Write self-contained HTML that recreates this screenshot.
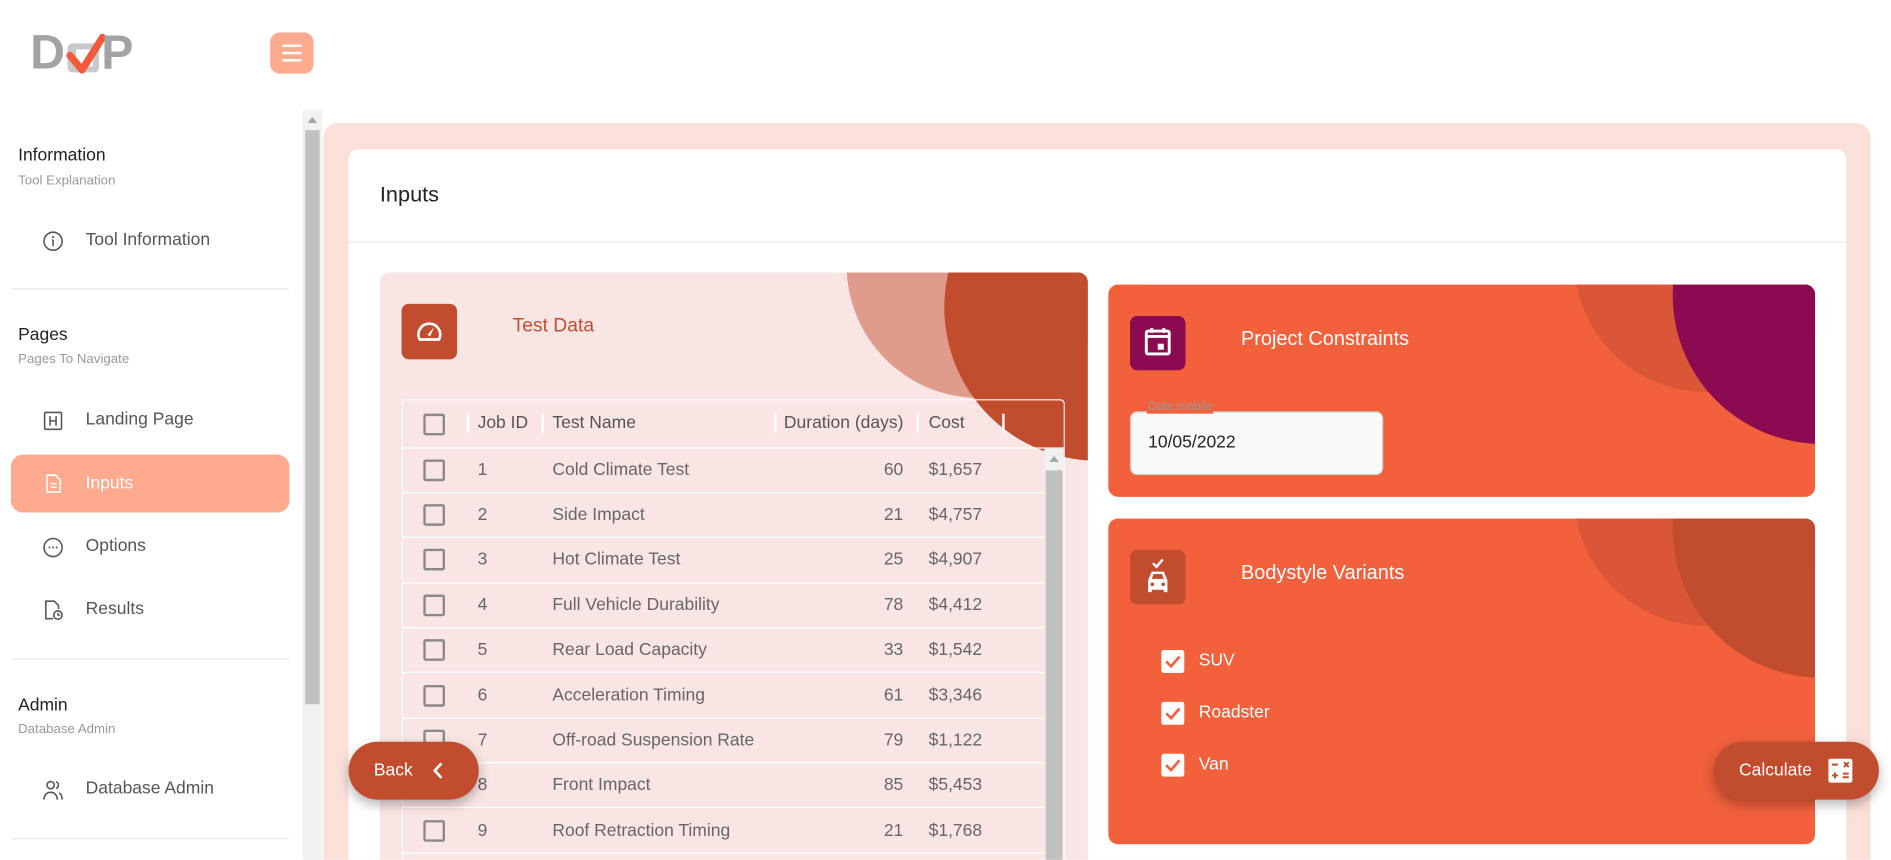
<!DOCTYPE html>
<html><head><meta charset="utf-8"><style>
*{box-sizing:border-box;margin:0;padding:0}
html,body{width:1891px;height:860px;overflow:hidden;background:#fff;font-family:"Liberation Sans",Arial,sans-serif}
#s{position:absolute;left:0;top:0;width:1568px;height:713px;transform:scale(1.20600);transform-origin:0 0;overflow:hidden}
.a{position:absolute}
.t{position:absolute;white-space:nowrap;line-height:1}
.nav{color:#555;font-size:14.5px}
.ic{position:absolute;width:18px;height:18px}
.hd{font-size:14.5px;color:#222}
.sub{font-size:11px;color:#999}
.div{position:absolute;left:10px;width:230px;height:1px;background:#e8e8e8}
.row{position:absolute;left:334px;width:532px;height:1px;background:#fff}
.cb{position:absolute;left:351px;width:18px;height:18px;border:2px solid #8a8a8a;border-radius:2px}
.cell{position:absolute;font-size:14.5px;color:#666;line-height:1;white-space:nowrap}
.wcb{position:absolute;left:963px;width:19px;height:19px;background:#fff;border-radius:2px}
.wl{position:absolute;left:994px;color:#fff;font-size:14.5px;line-height:1}
</style></head><body><div id="s">
<!-- logo -->
<div class="t" style="left:25px;top:24px;font-size:40px;font-weight:bold;color:#a3a3a3;letter-spacing:-1px">D</div>
<div class="a" style="left:56px;top:36px;width:26px;height:24px;border-radius:4px;background:#c8c8c8"></div>
<div class="a" style="left:63px;top:41px;width:14px;height:14px;background:#fff"></div>
<svg class="a" style="left:52px;top:22px" width="42" height="52" viewBox="0 0 42 52"><path d="M6 24 L16 36 L33 9" stroke="#f05a3a" stroke-width="6" fill="none" stroke-linecap="round" stroke-linejoin="round"/></svg>
<div class="t" style="left:84px;top:24px;font-size:40px;font-weight:bold;color:#a3a3a3">P</div>
<div class="a" style="left:224px;top:27px;width:36px;height:34px;border-radius:8px;background:#fdaa8f"></div>
<div class="a" style="left:234px;top:37px;width:16px;height:1.5px;background:#fff;box-shadow:0 6px 0 #fff,0 12px 0 #fff"></div>
<!-- sidebar scrollbar -->
<div class="a" style="left:251px;top:91px;width:16px;height:622px;background:#f1f1f1"></div>
<div class="a" style="left:253px;top:108px;width:12px;height:476px;background:#c1c1c1"></div>
<div class="a" style="left:255px;top:97px;border:4px solid transparent;border-bottom:5px solid #a3a3a3;border-top:0"></div>
<!-- sidebar -->
<div class="t hd" style="left:15px;top:122px">Information</div>
<div class="t sub" style="left:15px;top:145px">Tool Explanation</div>
<svg class="ic" style="left:35px;top:191px" viewBox="0 0 18 18"><circle cx="9" cy="9" r="7.5" fill="none" stroke="#555" stroke-width="1.3"/><path d="M9 8v5M8 8h1" stroke="#555" stroke-width="1.3" fill="none"/><circle cx="9" cy="5.6" r=".9" fill="#555"/></svg>
<div class="t nav" style="left:71px;top:192px">Tool Information</div>
<div class="div" style="top:239px"></div>
<div class="t hd" style="left:15px;top:271px">Pages</div>
<div class="t sub" style="left:15px;top:293px">Pages To Navigate</div>
<svg class="ic" style="left:35px;top:340px" viewBox="0 0 18 18"><rect x="2" y="2" width="14" height="14" rx="1" fill="none" stroke="#555" stroke-width="1.3"/><path d="M6.5 5v8M11.5 5v8M6.5 9h5" stroke="#555" stroke-width="1.3"/></svg>
<div class="t nav" style="left:71px;top:341px">Landing Page</div>
<div class="a" style="left:9px;top:377px;width:231px;height:48px;border-radius:10px;background:#fdaa8f"></div>
<svg class="ic" style="left:35px;top:392px" viewBox="0 0 18 18"><path d="M4 2h7l4 4v10H4z" fill="none" stroke="#fff" stroke-width="1.3" stroke-linejoin="round"/><path d="M7 9h5M7 12h5" stroke="#fff" stroke-width="1.2"/></svg>
<div class="t nav" style="left:71px;top:394px;color:#fff">Inputs</div>
<svg class="ic" style="left:35px;top:445px" viewBox="0 0 18 18"><circle cx="9" cy="9" r="7.5" fill="none" stroke="#555" stroke-width="1.3"/><circle cx="6" cy="9" r=".8" fill="#555"/><circle cx="9" cy="9" r=".8" fill="#555"/><circle cx="12" cy="9" r=".8" fill="#555"/></svg>
<div class="t nav" style="left:71px;top:446px">Options</div>
<svg class="ic" style="left:35px;top:497px" viewBox="0 0 18 18"><path d="M9 16H3V1.5h7l3.5 3.5v3" fill="none" stroke="#555" stroke-width="1.3"/><circle cx="13" cy="13" r="3.5" fill="none" stroke="#555" stroke-width="1.3"/><path d="M13 11v2h2" stroke="#555" stroke-width="1.1" fill="none"/></svg>
<div class="t nav" style="left:71px;top:498px">Results</div>
<div class="div" style="top:546px"></div>
<div class="t hd" style="left:15px;top:578px">Admin</div>
<div class="t sub" style="left:15px;top:600px">Database Admin</div>
<svg class="ic" style="left:35px;top:646px" viewBox="0 0 18 18"><circle cx="7" cy="5" r="3" fill="none" stroke="#555" stroke-width="1.3"/><path d="M1.5 17c0-4 2.5-6 5.5-6s5.5 2 5.5 6M11.5 2.2a3 3 0 010 5.6M14 11.5c1.5.8 2.5 2.5 2.5 5.5" fill="none" stroke="#555" stroke-width="1.3"/></svg>
<div class="t nav" style="left:71px;top:647px">Database Admin</div>
<div class="div" style="top:695px"></div>
<!-- main -->
<div class="a" style="left:268px;top:102px;width:1283px;height:611px;border-radius:12px 12px 0 0;background:#fbe0da"></div>
<div class="a" style="left:289px;top:124px;width:1242px;height:589px;border-radius:8px 8px 0 0;background:#fff"></div>
<div class="t" style="left:315px;top:152px;font-size:18px;color:#222">Inputs</div>
<div class="a" style="left:289px;top:200px;width:1242px;height:1px;background:#ececec"></div>
<!-- test data card -->
<div class="a" style="left:315px;top:226px;width:587px;height:487px;border-radius:8px 8px 0 0;background:#f9e6e4;overflow:hidden">
 <div class="a" style="left:387px;top:-116px;width:220px;height:220px;border-radius:50%;background:#df9c8c"></div>
 <div class="a" style="left:468px;top:-98px;width:254px;height:254px;border-radius:50%;background:#c24d2e"></div>
</div>
<div class="a" style="left:333px;top:252px;width:46px;height:46px;border-radius:6px;background:#c24d2e"></div>
<svg class="a" style="left:343px;top:262px" width="26" height="26" viewBox="0 0 26 26"><path d="M5 19.5a9 9 0 1116 0z" fill="none" stroke="#fff" stroke-width="2.2" stroke-linejoin="round"/><path d="M11.5 15.5L17 9.5l-3.5 7.5z" fill="#fff"/></svg>
<div class="t" style="left:425px;top:263px;font-size:16px;color:#c24d2e">Test Data</div>
<!-- table -->
<div class="a" style="left:333px;top:331px;width:550px;height:382px;border:1px solid #fff;border-bottom:0;border-radius:4px 4px 0 0"></div>
<div class="row" style="top:371px;width:548px"></div>
<div class="cb" style="top:343px"></div>
<div class="a" style="left:387px;top:343px;width:1.5px;height:16px;background:#fff"></div>
<div class="a" style="left:449px;top:343px;width:1.5px;height:16px;background:#fff"></div>
<div class="a" style="left:642px;top:343px;width:1.5px;height:16px;background:#fff"></div>
<div class="a" style="left:760px;top:343px;width:1.5px;height:16px;background:#fff"></div>
<div class="a" style="left:831px;top:343px;width:1.5px;height:16px;background:#fff"></div>
<div class="cell" style="left:396px;top:344px;color:#555">Job ID</div>
<div class="cell" style="left:458px;top:344px;color:#555">Test Name</div>
<div class="cell" style="left:650px;top:344px;color:#555">Duration (days)</div>
<div class="cell" style="left:770px;top:344px;color:#555">Cost</div>
<div class="a" style="left:866px;top:372px;width:16px;height:341px;background:#f1f1f1"></div>
<div class="a" style="left:867px;top:390px;width:14px;height:323px;background:#c1c1c1"></div>
<div class="a" style="left:870px;top:378px;border:4px solid transparent;border-bottom:5px solid #a3a3a3;border-top:0"></div>

<div class="cb" style="top:381px"></div><div class="cell" style="left:396px;top:383px">1</div><div class="cell" style="left:458px;top:383px">Cold Climate Test</div><div class="cell" style="left:700px;width:49px;text-align:right;top:383px">60</div><div class="cell" style="left:770px;top:383px">$1,657</div><div class="row" style="top:408px"></div>
<div class="cb" style="top:418px"></div><div class="cell" style="left:396px;top:420px">2</div><div class="cell" style="left:458px;top:420px">Side Impact</div><div class="cell" style="left:700px;width:49px;text-align:right;top:420px">21</div><div class="cell" style="left:770px;top:420px">$4,757</div><div class="row" style="top:445px"></div>
<div class="cb" style="top:455px"></div><div class="cell" style="left:396px;top:457px">3</div><div class="cell" style="left:458px;top:457px">Hot Climate Test</div><div class="cell" style="left:700px;width:49px;text-align:right;top:457px">25</div><div class="cell" style="left:770px;top:457px">$4,907</div><div class="row" style="top:483px"></div>
<div class="cb" style="top:493px"></div><div class="cell" style="left:396px;top:495px">4</div><div class="cell" style="left:458px;top:495px">Full Vehicle Durability</div><div class="cell" style="left:700px;width:49px;text-align:right;top:495px">78</div><div class="cell" style="left:770px;top:495px">$4,412</div><div class="row" style="top:520px"></div>
<div class="cb" style="top:530px"></div><div class="cell" style="left:396px;top:532px">5</div><div class="cell" style="left:458px;top:532px">Rear Load Capacity</div><div class="cell" style="left:700px;width:49px;text-align:right;top:532px">33</div><div class="cell" style="left:770px;top:532px">$1,542</div><div class="row" style="top:557px"></div>
<div class="cb" style="top:568px"></div><div class="cell" style="left:396px;top:570px">6</div><div class="cell" style="left:458px;top:570px">Acceleration Timing</div><div class="cell" style="left:700px;width:49px;text-align:right;top:570px">61</div><div class="cell" style="left:770px;top:570px">$3,346</div><div class="row" style="top:595px"></div>
<div class="cb" style="top:605px"></div><div class="cell" style="left:396px;top:607px">7</div><div class="cell" style="left:458px;top:607px">Off-road Suspension Rate</div><div class="cell" style="left:700px;width:49px;text-align:right;top:607px">79</div><div class="cell" style="left:770px;top:607px">$1,122</div><div class="row" style="top:632px"></div>
<div class="cb" style="top:642px"></div><div class="cell" style="left:396px;top:644px">8</div><div class="cell" style="left:458px;top:644px">Front Impact</div><div class="cell" style="left:700px;width:49px;text-align:right;top:644px">85</div><div class="cell" style="left:770px;top:644px">$5,453</div><div class="row" style="top:669px"></div>
<div class="cb" style="top:680px"></div><div class="cell" style="left:396px;top:682px">9</div><div class="cell" style="left:458px;top:682px">Roof Retraction Timing</div><div class="cell" style="left:700px;width:49px;text-align:right;top:682px">21</div><div class="cell" style="left:770px;top:682px">$1,768</div><div class="row" style="top:707px"></div>
<!-- project constraints -->
<div class="a" style="left:919px;top:236px;width:586px;height:176px;border-radius:8px;background:#f2603c;overflow:hidden">
 <div class="a" style="left:386px;top:-131px;width:220px;height:220px;border-radius:50%;background:#db5636"></div>
 <div class="a" style="left:468px;top:-114px;width:246px;height:246px;border-radius:50%;background:#8b0a50"></div>
</div>
<div class="a" style="left:937px;top:262px;width:46px;height:45px;border-radius:6px;background:#8b0a50"></div>
<svg class="a" style="left:947px;top:270px" width="26" height="28" viewBox="0 0 26 28"><rect x="3.5" y="4.5" width="19" height="19" rx="1.5" fill="none" stroke="#fff" stroke-width="2.4"/><path d="M3.5 9h19" stroke="#fff" stroke-width="2.4"/><path d="M8 2v4M18 2v4" stroke="#fff" stroke-width="2.4"/><rect x="13" y="15" width="5" height="5" fill="#fff"/></svg>
<div class="t" style="left:1029px;top:273px;font-size:16.5px;color:#fff">Project Constraints</div>
<div class="a" style="left:937px;top:341px;width:210px;height:53px;border-radius:6px;background:#f9f9f9;border:1px solid #ccc"></div>
<div class="t" style="left:951px;top:333px;font-size:10px;color:#999;background:#f2603c;padding:0 1px">Date mobile</div>
<div class="t" style="left:952px;top:360px;font-size:14.5px;color:#222">10/05/2022</div>
<!-- bodystyle -->
<div class="a" style="left:919px;top:430px;width:586px;height:270px;border-radius:8px;background:#f2603c;overflow:hidden">
 <div class="a" style="left:386px;top:-131px;width:220px;height:220px;border-radius:50%;background:#db5636"></div>
 <div class="a" style="left:468px;top:-114px;width:246px;height:246px;border-radius:50%;background:#c24d2e"></div>
</div>
<div class="a" style="left:937px;top:456px;width:46px;height:45px;border-radius:6px;background:#c24d2e"></div>
<svg class="a" style="left:947px;top:461px" width="26" height="36" viewBox="0 0 26 36"><path d="M9 6l3 3 5-6" stroke="#fff" stroke-width="2" fill="none"/><path d="M5 20l3-7h10l3 7v10h-3v-2H8v2H5z" fill="#fff"/><path d="M8 19l1.5-4h7l1.5 4z" fill="#c24d2e"/><circle cx="8.5" cy="23.5" r="1.5" fill="#c24d2e"/><circle cx="17.5" cy="23.5" r="1.5" fill="#c24d2e"/></svg>
<div class="t" style="left:1029px;top:467px;font-size:16.5px;color:#fff">Bodystyle Variants</div>
<div class="wcb" style="top:539px"></div><svg class="a" style="left:963px;top:539px" width="19" height="19" viewBox="0 0 19 19"><path d="M4 9.5l4 4 7-8" stroke="#f2603c" stroke-width="2.2" fill="none"/></svg><div class="wl" style="top:541px">SUV</div>
<div class="wcb" style="top:582px"></div><svg class="a" style="left:963px;top:582px" width="19" height="19" viewBox="0 0 19 19"><path d="M4 9.5l4 4 7-8" stroke="#f2603c" stroke-width="2.2" fill="none"/></svg><div class="wl" style="top:584px">Roadster</div>
<div class="wcb" style="top:625px"></div><svg class="a" style="left:963px;top:625px" width="19" height="19" viewBox="0 0 19 19"><path d="M4 9.5l4 4 7-8" stroke="#f2603c" stroke-width="2.2" fill="none"/></svg><div class="wl" style="top:627px">Van</div>
<!-- buttons -->
<div class="a" style="left:289px;top:615px;width:108px;height:48px;border-radius:24px;background:#c24d2e;box-shadow:0 4px 10px rgba(0,0,0,.3)"></div>
<div class="t" style="left:310px;top:632px;font-size:14.5px;color:#fff">Back</div>
<svg class="a" style="left:357px;top:631px" width="14" height="16" viewBox="0 0 14 16"><path d="M9 2L3.5 8 9 14" stroke="#fff" stroke-width="2.2" fill="none"/></svg>
<div class="a" style="left:1421px;top:615px;width:137px;height:48px;border-radius:24px;background:#c24d2e;box-shadow:0 4px 10px rgba(0,0,0,.3)"></div>
<div class="t" style="left:1442px;top:632px;font-size:14.5px;color:#fff">Calculate</div>
<svg class="a" style="left:1516px;top:629px" width="20" height="20" viewBox="0 0 20 20"><rect x="0" y="0" width="20" height="20" rx="2" fill="#fff"/><path d="M3 5h5M13 3l4 4M17 3l-4 4M3 14h5M5.5 11.5v5M12 12.5h5M12 15.5h5" stroke="#c24d2e" stroke-width="1.6"/></svg>
</div></body></html>
